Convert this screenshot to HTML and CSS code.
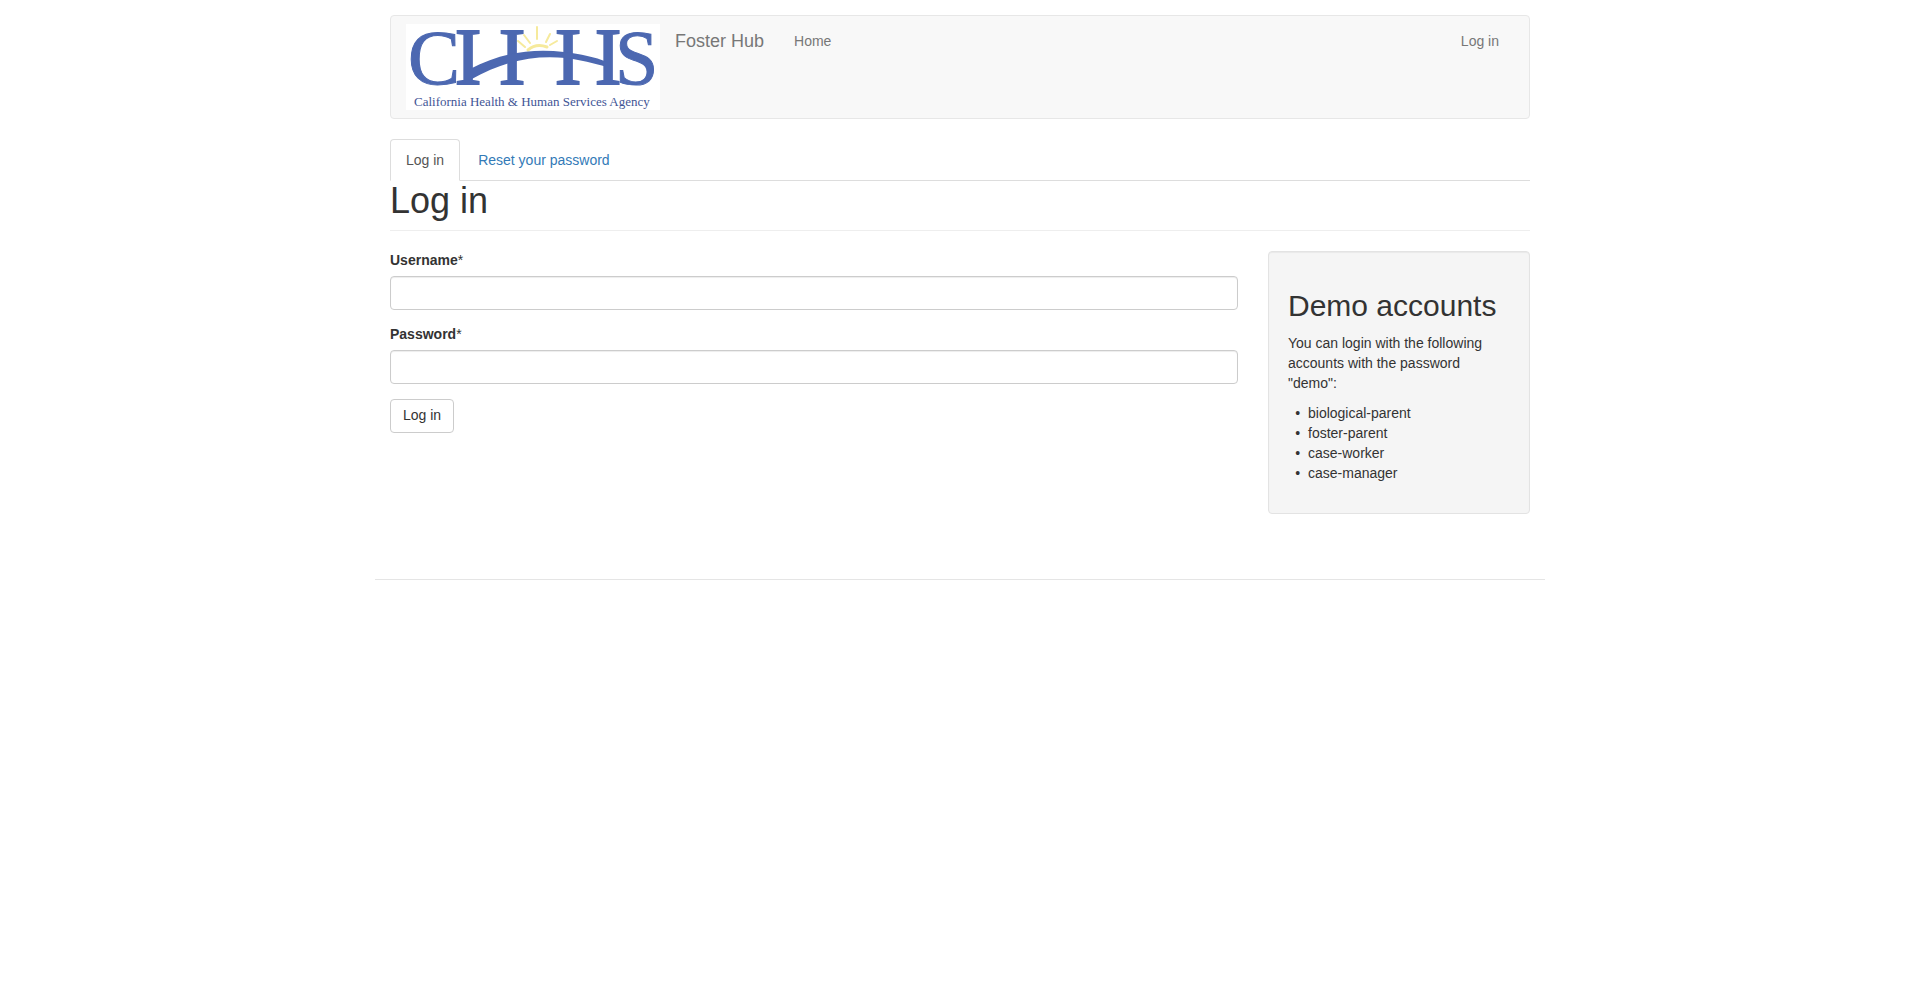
FILE: index.html
```html
<!DOCTYPE html>
<html lang="en">
<head>
<meta charset="utf-8">
<title>Log in | Foster Hub</title>
<link rel="stylesheet" href="styles.css">
</head>
<body>
<header class="container">
  <nav class="navbar">
    <a class="logo" href="#" title="Home">
      <svg width="254" height="86" viewBox="0 0 254 86" role="img" aria-label="CHHS, California Health &amp; Human Services Agency">
        <rect width="254" height="86" fill="#fff"/>
        <g fill="none" stroke="#f6ea9c" stroke-width="2" stroke-linecap="round">
          <path d="M122 26Q130 19 141 23" stroke-width="3"/>
          <path d="M112 17L119 23M118 11L124 19M131 3V15M144 10L140 18M151 17L144 21"/>
        </g>
        <g class="logo-letters">
          <text x="2" y="60">C</text>
          <g class="logo-pillars">
            <text x="62" y="60">I</text>
            <text x="106" y="60">I</text>
            <text x="162" y="60">I</text>
            <text x="202" y="60">I</text>
          </g>
          <text x="209" y="60">S</text>
        </g>
        <path d="M64 45C94 29 126 24 158 28C175 30 189 33 201 38V43C187 39 175 36 160 34C126 31 98 37 64 56Z" fill="#4c68b1"/>
        <text class="logo-caption" x="8" y="82">California Health &amp; Human Services Agency</text>
      </svg>
    </a>
    <a class="brand" href="#">Foster Hub</a>
    <a class="nav-link" href="#">Home</a>
    <a class="nav-link nav-end" href="#">Log in</a>
  </nav>
</header>
<div class="container">
  <ul class="tabs">
    <li><a class="tab tab-active" href="#">Log in</a></li>
    <li><a class="tab" href="#">Reset your password</a></li>
  </ul>
  <h1 class="page-header">Log in</h1>
  <div class="columns">
    <main>
      <form>
        <div class="form-group">
          <label for="name">Username<span class="required">*</span></label>
          <input class="control" id="name" type="text">
        </div>
        <div class="form-group">
          <label for="pass">Password<span class="required">*</span></label>
          <input class="control" id="pass" type="password">
        </div>
        <button class="btn" type="button">Log in</button>
      </form>
    </main>
    <aside class="well">
      <h2>Demo accounts</h2>
      <p>You can login with the following accounts with the password "demo":</p>
      <ul class="accounts">
        <li>biological-parent</li>
        <li>foster-parent</li>
        <li>case-worker</li>
        <li>case-manager</li>
      </ul>
    </aside>
  </div>
</div>
<footer class="footer"></footer>
</body>
</html>
```
FILE: styles.css
```css
* {
  box-sizing: border-box;
}

body {
  margin: 0;
  padding-top: 15px;
  background: #fff;
  color: #333;
  font: 14px/20px "Liberation Sans", Arial, sans-serif;
}

a {
  color: #337ab7;
  text-decoration: none;
}

.container,
.footer {
  max-width: 1170px;
  margin: 0 auto;
  padding: 0 15px;
}

.navbar {
  display: flex;
  align-items: flex-start;
  margin-bottom: 20px;
  padding: 0 15px;
  background: #f8f8f8;
  border: 1px solid #e7e7e7;
  border-radius: 4px;
}

.navbar a {
  color: #777;
}

.logo {
  display: flex;
  margin-right: 15px;
  padding: 8px 0;
}

.logo svg {
  overflow: visible;
}

.logo-letters {
  fill: #4c68b1;
  stroke: #4c68b1;
  stroke-width: 1px;
  font: 80px "Liberation Serif", serif;
}

.logo-letters > text {
  font-size: 78px;
}

.logo-pillars {
  stroke-width: 2px;
  text-anchor: middle;
}

.logo-caption {
  fill: #3f5596;
  stroke: #3f5596;
  stroke-width: 0;
  font: 13px "Liberation Serif", serif;
}

.brand {
  padding: 15px 15px 15px 0;
  font-size: 18px;
}

.nav-link {
  padding: 15px;
}

.nav-end {
  margin-left: auto;
}

.tabs {
  display: flex;
  gap: 2px;
  margin: 0;
  padding: 0;
  list-style: none;
  border-bottom: 1px solid #ddd;
}

.tab {
  display: block;
  margin-bottom: -1px;
  padding: 10px 15px;
  border: 1px solid transparent;
  border-radius: 4px 4px 0 0;
}

.tab-active {
  color: #555;
  background: #fff;
  border-color: #ddd #ddd #fff;
}

h1,
h2 {
  font-weight: 500;
}

.page-header {
  margin: 0 0 20px;
  padding-bottom: 9px;
  border-bottom: 1px solid #eee;
  font-size: 36px;
  line-height: 40px;
}

.columns {
  display: grid;
  grid-template-columns: 1fr 262px;
  gap: 30px;
  align-items: start;
}

.form-group {
  margin-bottom: 15px;
}

label {
  display: block;
  margin-bottom: 7px;
  font-weight: bold;
  line-height: 18px;
}

.required {
  font-weight: normal;
}

.control {
  display: block;
  width: 100%;
  height: 34px;
  padding: 6px 12px;
  color: #555;
  background: #fff;
  border: 1px solid #ccc;
  border-radius: 4px;
  box-shadow: inset 0 1px 1px rgba(0, 0, 0, 0.075);
  font: inherit;
}

.btn {
  display: block;
  padding: 5px 12px 7px;
  color: #333;
  background: #fff;
  border: 1px solid #ccc;
  border-radius: 4px;
  font: inherit;
}

.well {
  margin-bottom: 20px;
  padding: 19px;
  background: #f5f5f5;
  border: 1px solid #e3e3e3;
  border-radius: 4px;
  box-shadow: inset 0 1px 1px rgba(0, 0, 0, 0.05);
}

h2 {
  margin: 18px 0 11px;
  font-size: 30px;
  line-height: 33px;
}

p {
  margin: 0 0 10px;
}

.accounts {
  margin: 0 0 11px;
  padding-left: 20px;
  list-style-type: "•  ";
}

.footer {
  margin-top: 45px;
  padding: 35px 15px 36px;
  border-top: 1px solid #e5e5e5;
}
```
